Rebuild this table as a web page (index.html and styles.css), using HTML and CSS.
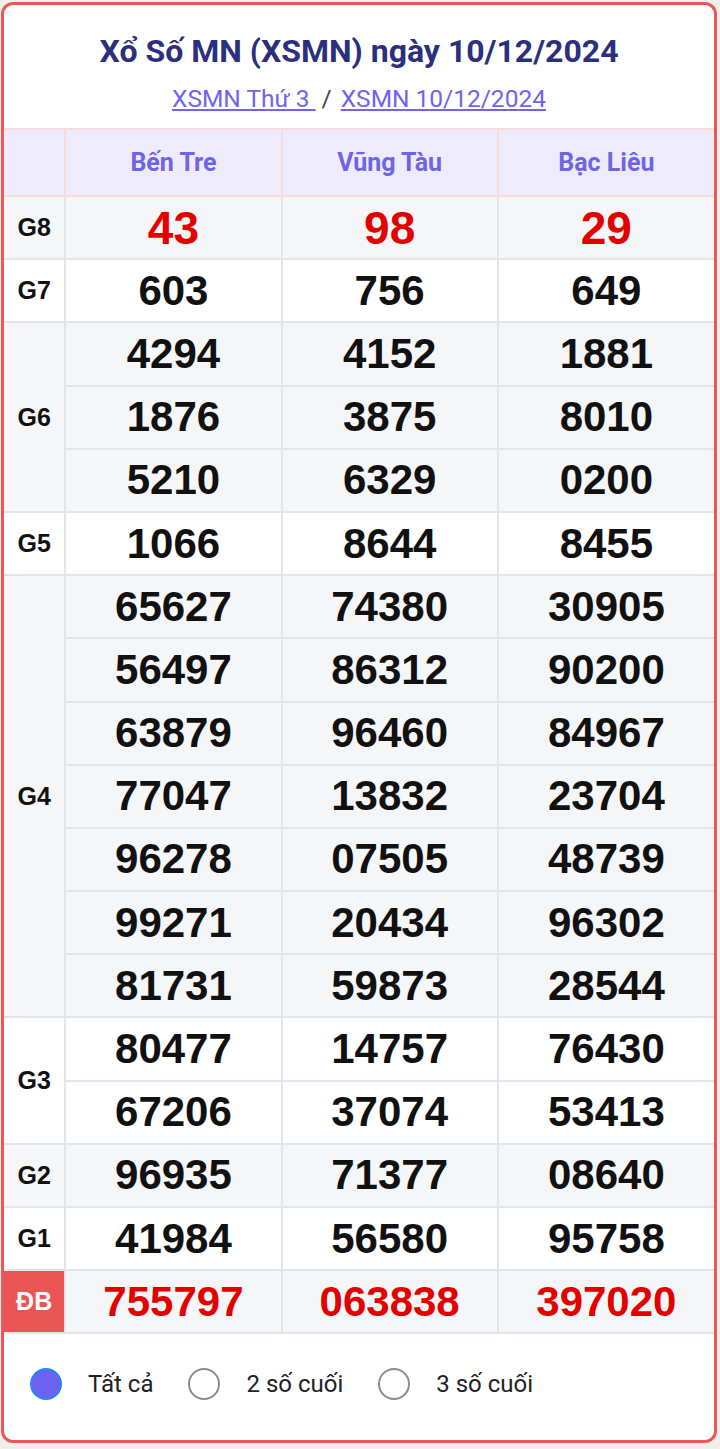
FILE: index.html
```html
<!DOCTYPE html>
<html lang="vi">
<head>
<meta charset="utf-8">
<title>XSMN 10/12/2024</title>
<link rel="stylesheet" href="styles.css">
</head>
<body>
<div class="card">
  <div class="head">
    <h1 class="title">Xổ Số MN (XSMN) ngày 10/12/2024</h1>
    <div class="links"><a href="#">XSMN Thứ 3 </a><span class="sep">/</span><a href="#">XSMN 10/12/2024</a></div>
  </div>
  <table class="kq">
    <colgroup><col class="c0"><col class="c1"><col class="c1"><col class="c1"></colgroup>
    <thead>
      <tr class="hd"><th></th><th>Bến Tre</th><th>Vũng Tàu</th><th>Bạc Liêu</th></tr>
    </thead>
    <tbody>
      <tr class="g"><td class="lb">G8</td><td class="red big">43</td><td class="red big">98</td><td class="red big">29</td></tr>
      <tr class="w"><td class="lb">G7</td><td>603</td><td>756</td><td>649</td></tr>
      <tr class="g"><td class="lb" rowspan="3">G6</td><td>4294</td><td>4152</td><td>1881</td></tr>
      <tr class="g sub"><td>1876</td><td>3875</td><td>8010</td></tr>
      <tr class="g sub"><td>5210</td><td>6329</td><td>0200</td></tr>
      <tr class="w"><td class="lb">G5</td><td>1066</td><td>8644</td><td>8455</td></tr>
      <tr class="g"><td class="lb" rowspan="7">G4</td><td>65627</td><td>74380</td><td>30905</td></tr>
      <tr class="g sub"><td>56497</td><td>86312</td><td>90200</td></tr>
      <tr class="g sub"><td>63879</td><td>96460</td><td>84967</td></tr>
      <tr class="g sub"><td>77047</td><td>13832</td><td>23704</td></tr>
      <tr class="g sub"><td>96278</td><td>07505</td><td>48739</td></tr>
      <tr class="g sub"><td>99271</td><td>20434</td><td>96302</td></tr>
      <tr class="g sub"><td>81731</td><td>59873</td><td>28544</td></tr>
      <tr class="w"><td class="lb" rowspan="2">G3</td><td>80477</td><td>14757</td><td>76430</td></tr>
      <tr class="w sub"><td>67206</td><td>37074</td><td>53413</td></tr>
      <tr class="g"><td class="lb">G2</td><td>96935</td><td>71377</td><td>08640</td></tr>
      <tr class="w"><td class="lb">G1</td><td>41984</td><td>56580</td><td>95758</td></tr>
      <tr class="g"><td class="lb db">ĐB</td><td class="red">755797</td><td class="red">063838</td><td class="red">397020</td></tr>
    </tbody>
  </table>
  <div class="opts">
    <label class="opt"><span class="radio on"></span><span class="otext">Tất cả</span></label>
    <label class="opt"><span class="radio"></span><span class="otext">2 số cuối</span></label>
    <label class="opt"><span class="radio"></span><span class="otext">3 số cuối</span></label>
  </div>
</div>
</body>
</html>
```

FILE: styles.css
```css
html, body {
  margin: 0;
  padding: 0;
  background: #f1efea;
}
body {
  font-family: Roboto, "Liberation Sans", Arial, sans-serif;
}
.card {
  box-sizing: border-box;
  width: 716px;
  height: 1441px;
  margin: 2px 0 0 1px;
  border: 3px solid #ec5858;
  border-radius: 12px;
  background: #ffffff;
  overflow: hidden;
}
.head {
  height: 123px;
  box-sizing: border-box;
  padding-top: 26px;
  text-align: center;
}
.title {
  margin: 0;
  font-size: 32px;
  line-height: 40px;
  font-weight: 700;
  color: #2b2f80;
}
.links {
  margin-top: 15px;
  font-size: 24.5px;
  line-height: 26px;
  color: #333;
}
.links a {
  color: #6f63f0;
  text-decoration: underline;
}
.links .sep {
  margin: 0 9px 0 6px;
  color: #444;
}
.kq {
  width: 710px;
  border-collapse: collapse;
  table-layout: fixed;
  font-family: "Liberation Sans", Arial, sans-serif;
}
.c0 { width: 61px; }
.c1 { width: 215px; }
.kq th, .kq td {
  border: 2px solid #e4e5ec;
  padding: 0;
  text-align: center;
}
.kq tr:first-child th { border-top-color: #f6dcdc; }
.kq th:first-child, .kq td.lb { border-left: 0; }
.kq th:last-child, .kq td:last-child { border-right: 0; }
.hd th {
  height: 65px;
  background: #eeebfd;
  border-color: #f6dcdc;
  color: #6e64e6;
  font-family: Roboto, "Liberation Sans", sans-serif;
  font-size: 25px;
  font-weight: 700;
}
.kq td {
  height: 61.2px;
  font-size: 42px;
  font-weight: 700;
  color: #111;
}
.kq tr.sub td { border-top-color: #eceef3; }
.g td { background: #f5f6f8; }
.w td { background: #ffffff; }
.kq td.lb {
  font-size: 25px;
  color: #111;
}
.kq td.db {
  background: #e95555;
  color: #ffffff;
}
.kq td.red { color: #e50000; }
.kq td.big { font-size: 46px; }
.opts {
  display: flex;
  align-items: center;
  padding: 34px 0 0 26px;
  gap: 35px;
}
.opt {
  display: flex;
  align-items: center;
  gap: 26px;
  font-size: 24px;
  color: #222;
}
.radio {
  box-sizing: border-box;
  width: 32px;
  height: 32px;
  border-radius: 50%;
  border: 2px solid #8c8c8c;
  background: #fff;
}
.radio.on {
  background: #6c62ef;
  border-color: #1f88ff;
}
```
